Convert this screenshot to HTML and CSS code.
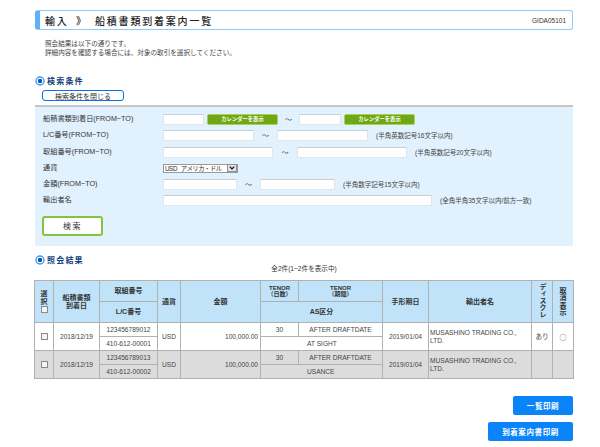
FILE: index.html
```html
<!DOCTYPE html>
<html lang="ja">
<head>
<meta charset="utf-8">
<title>船積書類到着案内一覧</title>
<link rel="stylesheet" href="styles.css">
</head>
<body>
<div class="page">
  <header class="title-bar">
    <h1 class="title"><span class="crumb">輸入</span><span class="sep">》</span><span>船積書類到着案内一覧</span></h1>
    <span class="screen-id">GIDA05101</span>
  </header>
  <p class="intro">照会結果は以下の通りです。<br>詳細内容を確認する場合には、対象の取引を選択してください。</p>

  <h2 class="section-head search-head">
    <svg class="bullet" viewBox="0 0 10 10"><circle cx="5" cy="5" r="4" fill="#fff" stroke="#3d9be8" stroke-width="1.4"/><rect x="3" y="3" width="4" height="4" rx="1" fill="#0b5cb0"/></svg>
    <span>検索条件</span>
  </h2>
  <button class="toggle" type="button">検索条件を閉じる</button>

  <section class="panel">
    <div class="row">
      <label class="label">船積書類到着日(FROM~TO)</label>
      <input class="field w41" type="text">
      <span class="cal">カレンダーを表示</span>
      <span class="tilde t-cal">〜</span>
      <input class="field w42" type="text">
      <span class="cal">カレンダーを表示</span>
    </div>
    <div class="row">
      <label class="label">L/C番号(FROM~TO)</label>
      <input class="field w91" type="text">
      <span class="tilde t-lc">〜</span>
      <input class="field w91" type="text">
      <span class="note">(半角英数記号16文字以内)</span>
    </div>
    <div class="row">
      <label class="label">取組番号(FROM~TO)</label>
      <input class="field w110" type="text">
      <span class="tilde t-no">〜</span>
      <input class="field w110" type="text">
      <span class="note">(半角英数記号20文字以内)</span>
    </div>
    <div class="row">
      <label class="label">通貨</label>
      <span class="select-box">
        <select class="select"><option>USD&nbsp;&nbsp;&nbsp;アメリカ・ドル</option></select>
        <svg class="select-arrow" viewBox="0 0 11 9"><rect x=".5" y=".5" width="10" height="8" fill="#e4e4e4" stroke="#888"/><path d="M3 3l2.5 2.5L8 3" fill="none" stroke="#111" stroke-width="1.4"/></svg>
      </span>
    </div>
    <div class="row">
      <label class="label">金額(FROM~TO)</label>
      <input class="field w74" type="text">
      <span class="tilde t-amt">〜</span>
      <input class="field w75" type="text">
      <span class="note">(半角数字記号15文字以内)</span>
    </div>
    <div class="row">
      <label class="label">輸出者名</label>
      <input class="field w269" type="text">
      <span class="note">(全角半角35文字以内/前方一致)</span>
    </div>
    <button class="search" type="button">検索</button>
  </section>

  <h2 class="section-head result-head">
    <svg class="bullet" viewBox="0 0 10 10"><circle cx="5" cy="5" r="4" fill="#fff" stroke="#3d9be8" stroke-width="1.4"/><rect x="3" y="3" width="4" height="4" rx="1" fill="#0b5cb0"/></svg>
    <span>照会結果</span>
  </h2>
  <p class="count">全2件(1~2件を表示中)</p>

  <table class="results">
    <colgroup>
      <col class="c1"><col class="c2"><col class="c3"><col class="c4"><col class="c5"><col class="c6"><col class="c7"><col class="c8"><col class="c9"><col class="c10"><col class="c11">
    </colgroup>
    <thead>
      <tr>
        <th rowspan="2" class="stack">選<br>択<br><input class="check" type="checkbox"></th>
        <th rowspan="2">船積書類<br>到着日</th>
        <th>取組番号</th>
        <th rowspan="2">通貨</th>
        <th rowspan="2">金額</th>
        <th class="tight">TENOR<br>（日数）</th>
        <th class="tight">TENOR<br>（期間）</th>
        <th rowspan="2">手形期日</th>
        <th rowspan="2">輸出者名</th>
        <th rowspan="2"><span class="vert">ディスクレ</span></th>
        <th rowspan="2" class="stack">取<br>消<br>表<br>示</th>
      </tr>
      <tr>
        <th>L/C番号</th>
        <th colspan="2">AS区分</th>
      </tr>
    </thead>
    <tbody>
      <tr>
        <td rowspan="2" class="ctr"><input class="check" type="checkbox"></td>
        <td rowspan="2" class="ctr">2018/12/19</td>
        <td class="ctr">123456789012</td>
        <td rowspan="2" class="ctr">USD</td>
        <td rowspan="2" class="num">100,000.00</td>
        <td class="ctr">30</td>
        <td class="ctr">AFTER DRAFTDATE</td>
        <td rowspan="2" class="ctr">2019/01/04</td>
        <td rowspan="2" class="name">MUSASHINO TRADING CO.,<br>LTD.</td>
        <td rowspan="2" class="ctr">あり</td>
        <td rowspan="2" class="ctr circle">○</td>
      </tr>
      <tr>
        <td class="ctr">410-612-00001</td>
        <td colspan="2" class="as">AT SIGHT</td>
      </tr>
      <tr class="alt">
        <td rowspan="2" class="ctr"><input class="check" type="checkbox"></td>
        <td rowspan="2" class="ctr">2018/12/19</td>
        <td class="ctr">123456789013</td>
        <td rowspan="2" class="ctr">USD</td>
        <td rowspan="2" class="num">100,000.00</td>
        <td class="ctr">30</td>
        <td class="ctr">AFTER DRAFTDATE</td>
        <td rowspan="2" class="ctr">2019/01/04</td>
        <td rowspan="2" class="name">MUSASHINO TRADING CO.,<br>LTD.</td>
        <td rowspan="2"></td>
        <td rowspan="2"></td>
      </tr>
      <tr class="alt">
        <td class="ctr">410-612-00002</td>
        <td colspan="2" class="as">USANCE</td>
      </tr>
    </tbody>
  </table>

  <div class="actions">
    <button class="print print-list" type="button">一覧印刷</button>
    <button class="print print-notice" type="button">到着案内書印刷</button>
  </div>
</div>
</body>
</html>
```
FILE: styles.css
```css
* { box-sizing: border-box; }
html, body { margin: 0; padding: 0; background: #fff; }
body {
  font-family: "Liberation Sans", "Noto Sans CJK JP", sans-serif;
  font-size: 7px;
  color: #333;
  overflow: hidden;
}
.page { width: 600px; height: 447px; padding: 10px 27px 0 35px; }

.title-bar {
  height: 20px;
  display: flex;
  align-items: center;
  justify-content: space-between;
  padding: 0 6px 0 5px;
  border: 1px solid #8ccbfb;
  border-left: 5px solid #5fb0f5;
  border-radius: 3px;
}
.title { margin: 0; font-size: 10px; font-weight: 500; letter-spacing: 1.8px; color: #222; display: flex; }
.crumb { width: 31px; }
.sep { width: 19px; }
.screen-id { font-size: 6.5px; color: #333; }

.intro { margin: 9px 0 0 10px; font-size: 6.6px; line-height: 9px; color: #444; }

.section-head { margin: 0; display: flex; align-items: center; gap: 2px; font-size: 8px; font-weight: 700; letter-spacing: 1.2px; color: #123f78; }
.search-head { margin-top: 18px; height: 11px; }
.result-head { margin-top: 8px; height: 11px; }
.bullet { width: 10px; height: 10px; flex: none; }

.toggle {
  display: block;
  margin: 4px 0 0 7px;
  width: 82px;
  height: 11px;
  padding: 0;
  background: #fff;
  border: 1px solid #0a6fe0;
  border-radius: 3px;
  font: 7px "Liberation Sans", "Noto Sans CJK JP", sans-serif;
  color: #333;
}

.panel {
  margin-top: 4px;
  height: 141px;
  padding: 7px 0 0 8px;
  background: #e1f1fe;
  border-top: 2px solid #c4c6c8;
}
.row { display: flex; align-items: flex-start; height: 16.3px; }
.label { width: 120px; flex: none; line-height: 10px; font-size: 7.2px; color: #333; }
.field { height: 11px; padding: 0; background: #fff; border: 1px solid #dfe6ea; border-top-color: #c8ced2; border-radius: 0; }
.w41 { width: 41px; }
.w42 { width: 42px; }
.w91 { width: 91px; }
.w110 { width: 110px; }
.w74 { width: 74px; }
.w75 { width: 75px; }
.w269 { width: 269px; }
.cal {
  width: 71px;
  height: 11px;
  margin-left: 3px;
  background: #6fa815;
  border: 1px solid #a6d05a;
  border-radius: 2px;
  color: #fff;
  font-size: 5.3px;
  font-weight: 700;
  line-height: 9px;
  text-align: center;
}
.tilde { line-height: 11px; font-size: 7px; color: #444; text-align: center; }
.t-cal { width: 21px; }
.t-lc { width: 23px; }
.t-no { width: 24px; }
.t-amt { width: 23px; }
.note { margin-left: 8px; line-height: 11px; font-size: 6.5px; color: #444; }

.select-box { display: flex; align-items: center; height: 9px; margin-top: 1px; width: 75px; border: 1px solid #999; background: #fff; }
.select {
  appearance: none;
  -webkit-appearance: none;
  flex: 1;
  min-width: 0;
  height: 7px;
  padding: 0 0 0 1px;
  border: 0;
  background: transparent;
  font: 6.4px/7px "Liberation Sans", "Noto Sans CJK JP", sans-serif;
  letter-spacing: -.5px;
  color: #333;
}
.select-arrow { width: 10px; height: 8px; flex: none; }

.search {
  display: block;
  margin: 4px 0 0 -1px;
  width: 61px;
  height: 20px;
  padding: 0;
  background: #fff;
  border: 2px solid #84c340;
  border-radius: 3px;
  font: 8px "Liberation Sans", "Noto Sans CJK JP", sans-serif;
  letter-spacing: 1.5px;
  color: #333;
}

.count { margin: 0; height: 15px; line-height: 8px; text-align: center; font-size: 6.6px; color: #333; }

.results {
  width: 539px;
  margin-left: -1px;
  table-layout: fixed;
  border-collapse: collapse;
  font-size: 6.6px;
  color: #444;
}
.c1 { width: 19px; }
.c2 { width: 46px; }
.c3 { width: 58px; }
.c4 { width: 23px; }
.c5 { width: 80px; }
.c6 { width: 38px; }
.c7 { width: 84px; }
.c8 { width: 46px; }
.c9 { width: 103px; }
.c10 { width: 21px; }
.c11 { width: 21px; }
.results th, .results td { border: 1px solid #aeb2b4; padding: 0; overflow: hidden; }
.results th { background: #c0e3f9; font-weight: 700; font-size: 7px; line-height: 8px; color: #333; height: 21px; text-align: center; }
.results .tight { font-size: 6px; line-height: 6.5px; }
.results td { height: 14px; line-height: 8px; background: #fff; }
.results .alt td { background: #dcdcdc; }
.results .stack { line-height: 7.5px; }
.vert { writing-mode: vertical-rl; display: inline-block; white-space: nowrap; line-height: 8px; }
.ctr { text-align: center; }
.num { text-align: right; padding-right: 2px !important; }
.name { padding-left: 1px !important; }
.as { padding-left: 46px !important; }
.results .circle { font-family: "Noto Sans CJK JP", sans-serif; font-size: 7px; }
.check {
  appearance: none;
  -webkit-appearance: none;
  display: inline-block;
  width: 7px;
  height: 7px;
  margin: 0;
  vertical-align: middle;
  background: #f4f4f4;
  border: 1px solid #8a8a8a;
}

.actions { display: flex; flex-direction: column; align-items: flex-end; gap: 7px; margin-top: 17px; }
.print {
  height: 19px;
  padding: 0;
  background: #0a84f8;
  border: 0;
  border-radius: 2px;
  color: #fff;
  font: 700 7.5px "Liberation Sans", "Noto Sans CJK JP", sans-serif;
  letter-spacing: .6px;
}
.print-list { width: 60px; }
.print-notice { width: 85px; }
```
